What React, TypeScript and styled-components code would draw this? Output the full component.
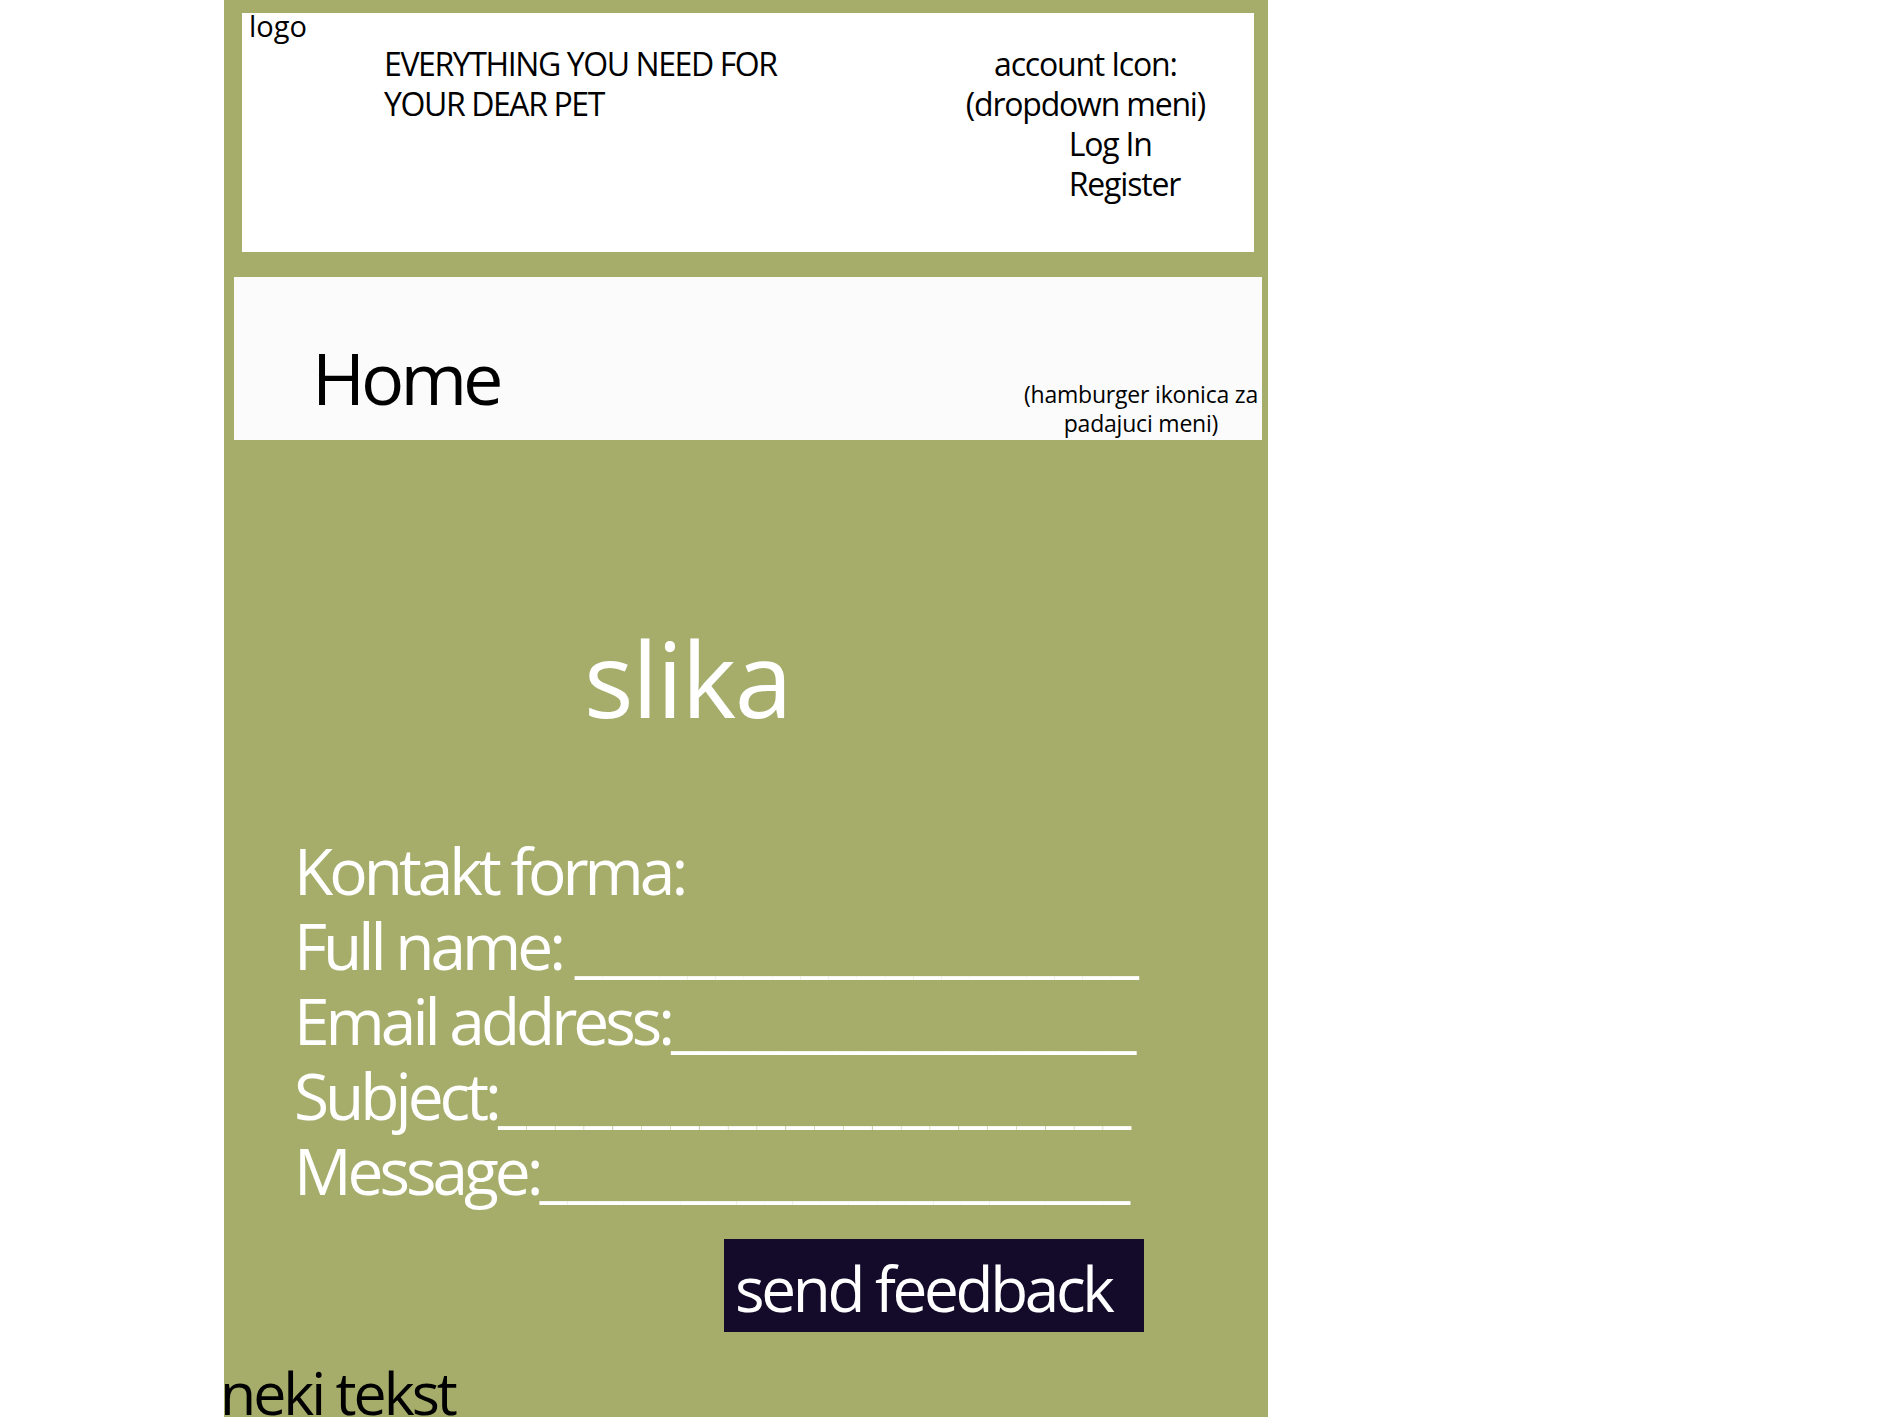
import styled, { createGlobalStyle } from "styled-components";

const GlobalStyle = createGlobalStyle`
  html, body {
    margin: 0;
    padding: 0;
    background: #ffffff;
  }
  body {
    font-family: "Open Sans", "Noto Sans", sans-serif;
  }
`;

const Page = styled.div`
  margin-left: 224px;
  width: 1044px;
  height: 1417px;
  background-color: #a6ad6b;
  display: flex;
  flex-direction: column;
  overflow: hidden;

  & > * {
    flex-shrink: 0;
  }
`;

const Header = styled.header`
  margin: 13px 14px 0 18px;
  height: 239px;
  background-color: #ffffff;
  display: grid;
  grid-template-columns: 142px 1fr auto;
  align-items: start;
  color: #000;
`;

const Logo = styled.div`
  padding: 2px 0 0 7px;
  font-size: 29px;
  line-height: 22px;
`;

const Tagline = styled.div`
  margin-top: 31px;
  font-size: 32px;
  line-height: 40px;
  letter-spacing: -1.4px;
`;

const Account = styled.div`
  margin: 31px 49px 0 0;
  font-size: 32px;
  line-height: 40px;
  letter-spacing: -1.2px;
  display: flex;
  flex-direction: column;
`;

const AccountLine = styled.div<{ $indent?: number }>`
  text-align: ${(p) => (p.$indent ? "left" : "center")};
  padding-left: ${(p) => p.$indent ?? 0}px;
`;

const HomeBar = styled.nav`
  margin: 25px 6px 0 10px;
  height: 163px;
  background-color: #fbfbfb;
  display: flex;
  align-items: flex-start;
  color: #000;
`;

const HomeLink = styled.div`
  margin: 64px 0 0 78px;
  font-size: 72px;
  line-height: 72px;
  letter-spacing: -4px;
`;

const MenuNote = styled.div`
  margin: 103px 4px 0 auto;
  font-size: 23px;
  line-height: 29px;
  letter-spacing: -0.2px;
  text-align: center;
`;

const Picture = styled.div`
  margin: 186px 0 0 360px;
  font-size: 104px;
  line-height: 104px;
  letter-spacing: -1.5px;
  color: #ffffff;
`;

const Form = styled.form`
  margin: 103px 0 0 70px;
  color: #ffffff;
  font-size: 64px;
  line-height: 75px;
  letter-spacing: -4px;
`;

const FormRow = styled.div`
  white-space: nowrap;
`;

const Blank = styled.span<{ $spacing: number }>`
  letter-spacing: ${(p) => p.$spacing}px;
`;

const SendButton = styled.button`
  box-sizing: border-box;
  margin: 31px 0 0 500px;
  width: 420px;
  height: 93px;
  padding: 5px 0 0 11px;
  border: none;
  border-radius: 0;
  background-color: #140b2b;
  color: #ffffff;
  font-family: "Open Sans", "Noto Sans", sans-serif;
  font-size: 62px;
  line-height: 85px;
  letter-spacing: -3.3px;
  text-align: left;
`;

const Footer = styled.div`
  margin: 31px 0 0 -4px;
  font-size: 59px;
  line-height: 59px;
  letter-spacing: -3px;
  color: #000;
`;

const fields: { label: string; blanks: number; spacing: number }[] = [
  { label: "Full name: ", blanks: 20, spacing: 0.2 },
  { label: "Email address:", blanks: 17, spacing: -0.7 },
  { label: "Subject:", blanks: 22, spacing: 0.8 },
  { label: "Message:", blanks: 21, spacing: 0.1 },
];

export default function App() {
  return (
    <>
      <GlobalStyle />
      <Page>
        <Header>
          <Logo>logo</Logo>
          <Tagline>
            EVERYTHING YOU NEED FOR
            <br />
            YOUR DEAR PET
          </Tagline>
          <Account>
            <AccountLine>account Icon:</AccountLine>
            <AccountLine>(dropdown meni)</AccountLine>
            <AccountLine $indent={103}>Log In</AccountLine>
            <AccountLine $indent={103}>Register</AccountLine>
          </Account>
        </Header>
        <HomeBar>
          <HomeLink>Home</HomeLink>
          <MenuNote>
            (hamburger ikonica za
            <br />
            padajuci meni)
          </MenuNote>
        </HomeBar>
        <Picture>slika</Picture>
        <Form onSubmit={(e) => e.preventDefault()}>
          <FormRow>Kontakt forma:</FormRow>
          {fields.map((f) => (
            <FormRow key={f.label}>
              {f.label}
              <Blank $spacing={f.spacing}>{"_".repeat(f.blanks)}</Blank>
            </FormRow>
          ))}
        </Form>
        <SendButton type="button">send feedback</SendButton>
        <Footer>neki tekst</Footer>
      </Page>
    </>
  );
}
